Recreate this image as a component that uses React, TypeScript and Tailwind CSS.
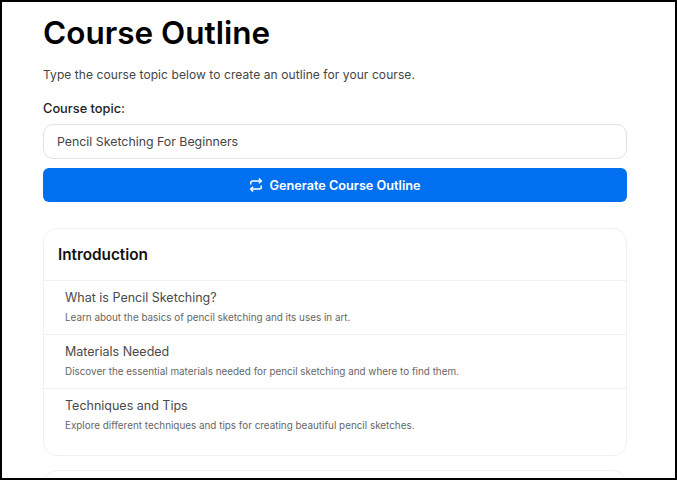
import React from "react";

const rows = [
  ["What is Pencil Sketching?", "Learn about the basics of pencil sketching and its uses in art.", "h-[54px]"],
  ["Materials Needed", "Discover the essential materials needed for pencil sketching and where to find them.", "h-[54px]"],
  ["Techniques and Tips", "Explore different techniques and tips for creating beautiful pencil sketches.", "h-[67px]"],
];

export default function App() {
  return (
    <div className="h-[480px] w-[677px] overflow-hidden border-2 border-black bg-white font-['Inter',sans-serif] text-[#111]">
      <div className="ml-[41px] w-[584px] pt-[13px]">
        <h1 className="text-[31.5px] font-semibold leading-[36px] text-black">Course Outline</h1>
        <p className="mt-[15px] text-[12px] leading-[18px] tracking-[0.08px] text-[#444]">Type the course topic below to create an outline for your course.</p>
        <label className="mt-[16px] block text-[12.8px] font-medium leading-[18px] text-[#222]">Course topic:</label>
        <div className="mt-[6px] flex h-[35px] items-center rounded-[10px] border border-[#e2e2e4] px-[13px] pt-[2px] text-[12.35px] text-[#444]">Pencil Sketching For Beginners</div>
        <button className="mt-[9px] flex h-[34px] w-full items-center justify-center gap-[6px] rounded-[6px] bg-[#0070f0] pt-[1px] text-[12.7px] font-semibold text-white">
          <svg width="14" height="14" viewBox="0 0 24 24" fill="none" stroke="currentColor" strokeWidth="2.6" className="-mt-[2px]"><path d="M17 1l4 4-4 4" /><path d="M3 11V8a3 3 0 0 1 3-3h15" /><path d="M7 23l-4-4 4-4" /><path d="M21 13v3a3 3 0 0 1-3 3H3" /></svg>
          Generate Course Outline
        </button>
        <section className="mt-[26px] rounded-[14px] border border-[#f1f1f2]">
          <h2 className="flex h-[51px] items-center px-[14px] pt-[2px] text-[15.3px] font-semibold text-[#111]">Introduction</h2>
          {rows.map(([t, d, h]) => (
            <div key={t} className={`${h} border-t border-[#f1f1f2] px-[21px] pt-[8px]`}>
              <div className="text-[12.5px] leading-[18px] text-[#4a4a4a]">{t}</div>
              <div className="mt-[3px] text-[9.9px] leading-[14px] text-[#666]">{d}</div>
            </div>
          ))}
        </section>
        <div className="mt-[14px] h-[40px] rounded-[14px] border border-[#f1f1f2]" />
      </div>
    </div>
  );
}
